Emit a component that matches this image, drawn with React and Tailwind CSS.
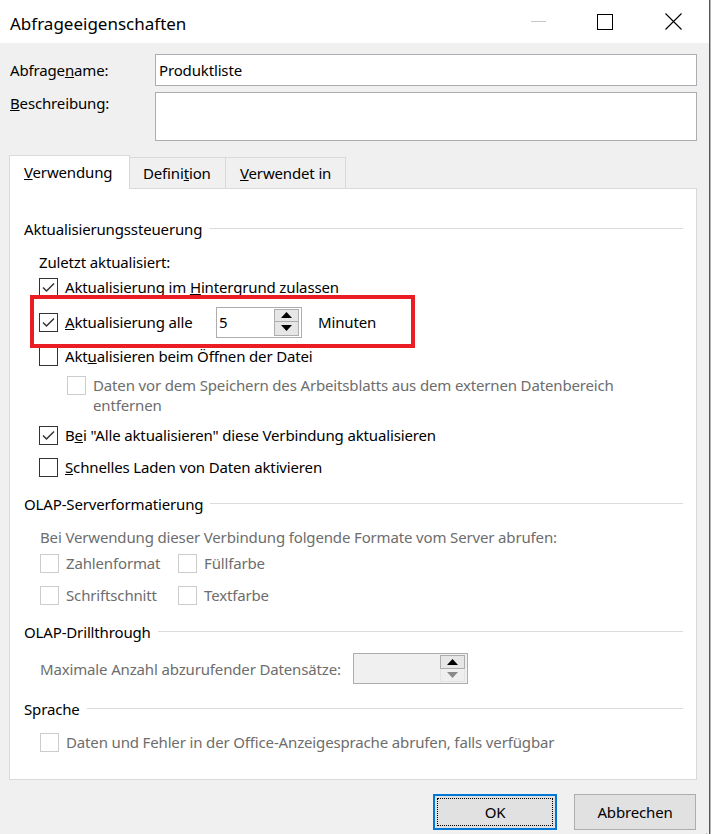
import React from "react";

const FONT = { fontFamily: '"Noto Sans", "Open Sans", Arial, sans-serif' };

function Check({ checked = false, disabled = false }) {
  return (
    <div
      className={`w-[19px] h-[19px] shrink-0 border bg-white flex items-center justify-center ${
        disabled ? "border-[#cccccc]" : "border-[#333333]"
      }`}
    >
      {checked && (
        <svg width="17" height="17" viewBox="0 0 17 17">
          <polyline points="3,8.5 6.5,12 14,4.5" fill="none" stroke="#333333" strokeWidth="1.5" />
        </svg>
      )}
    </div>
  );
}

function GroupHeading({ children, className = "" }) {
  return (
    <div className={`h-[20px] flex items-center ${className}`}>
      <span className="text-black whitespace-nowrap">{children}</span>
      <div className="flex-1 ml-[7px] mr-[13px] h-px bg-[#dcdcdc] -translate-y-[1px]" />
    </div>
  );
}

function Spinner({ value = "", disabled = false, className = "" }) {
  return (
    <div
      className={`h-[31px] border border-[#adadad] flex items-stretch ${
        disabled ? "bg-[#f0f0f0]" : "bg-white"
      } ${className}`}
    >
      <div className="flex-1 flex items-center pl-[2px] text-black">{value}</div>
      <div className="w-[25px] flex flex-col py-[1px] mr-[2px]">
        <div className="h-[14px] border border-[#adadad] bg-[#e6e6e6] flex items-center justify-center">
          <svg width="11" height="6" viewBox="0 0 11 6">
            <polygon points="0,6 5.5,0 11,6" fill="#000" />
          </svg>
        </div>
        <div
          className={`h-[14px] flex items-center justify-center ${
            disabled ? "border border-[#e3e3e3] border-t-0 bg-[#efefef]" : "border border-[#adadad] border-t-0 bg-[#e6e6e6]"
          }`}
        >
          <svg width="11" height="6" viewBox="0 0 11 6">
            <polygon points="0,0 11,0 5.5,6" fill={disabled ? "#8a8a8a" : "#000"} />
          </svg>
        </div>
      </div>
    </div>
  );
}

export default function App() {
  return (
    <div className="w-[711px] h-[834px] flex bg-white text-[15px] leading-[20px] tracking-[-0.15px]" style={FONT}>
      <div className="w-[709px] h-[834px] flex flex-col bg-[#f0f0f0]">
        {/* Title bar */}
        <div className="h-[43px] bg-white flex items-center shrink-0">
          <div className="pl-[10px] mt-[5px] text-[17px] text-black tracking-normal">Abfrageeigenschaften</div>
          <div className="ml-auto flex h-full">
            <div className="w-[70px] flex items-center justify-center">
              <div className="w-[15px] h-px bg-[#c6c6c6]" />
            </div>
            <div className="w-[64px] flex items-center justify-center">
              <div className="w-[16px] h-[16px] border border-black" />
            </div>
            <div className="w-[72px] flex items-center justify-center">
              <svg width="17" height="17" viewBox="0 0 17 17">
                <path d="M0.5 0.5 L16.5 16.5 M16.5 0.5 L0.5 16.5" stroke="#000" strokeWidth="1.1" fill="none" />
              </svg>
            </div>
          </div>
        </div>

        {/* Body */}
        <div className="flex-1 flex flex-col pt-[11px]">
          <div className="flex pl-[10px]">
            <div className="w-[145px] h-[32px] flex items-center text-black">
              Abfrage<u>n</u>ame:
            </div>
            <div className="w-[542px] h-[32px] border border-[#abadb3] bg-white flex items-center pl-[3px] text-black">
              Produktliste
            </div>
          </div>
          <div className="flex pl-[10px] mt-[6px]">
            <div className="w-[145px] pt-[1px] text-black">
              <u>B</u>eschreibung:
            </div>
            <div className="w-[542px] h-[49px] border border-[#abadb3] bg-white" />
          </div>

          {/* Tabs */}
          <div className="flex items-end pl-[9px] mt-[14px]">
            <div className="relative z-10 -mb-px w-[121px] h-[34px] bg-white border border-b-0 border-[#d9d9d9] pl-[14px] flex items-center text-black">
              <span className="-mt-[1px]">
                <u>V</u>erwendung
              </span>
            </div>
            <div className="w-[96px] h-[31px] border-t border-r border-[#d9d9d9] bg-[#f0f0f0] pl-[13px] flex items-center text-black">
              Defini<u>t</u>ion
            </div>
            <div className="w-[120px] h-[31px] border-t border-r border-[#d9d9d9] bg-[#f0f0f0] pl-[14px] flex items-center text-black">
              <span>
                <u>V</u>erwendet in
              </span>
            </div>
          </div>

          {/* Panel */}
          <div className="ml-[9px] w-[688px] h-[592px] bg-white border border-[#d9d9d9] flex flex-col pl-[14px] pt-[30px] text-black">
            <GroupHeading>Aktualisierungssteuerung</GroupHeading>
            <div className="h-[20px] mt-[13px] ml-[15px] flex items-center">Zuletzt aktualisiert:</div>

            <div className="h-[20px] mt-[5px] ml-[15px] flex items-center gap-[7px]">
              <Check checked />
              <span>
                Aktualisierung im <u>H</u>intergrund zulassen
              </span>
            </div>

            <div className="relative h-[32px] mt-[9px] flex items-center">
              <div className="absolute left-[6px] -top-[11px] w-[385px] h-[53px] border-4 border-[#ea1c24] pointer-events-none" />
              <div className="ml-[15px] flex items-center gap-[7px] w-[177px]">
                <Check checked />
                <span>
                  <u>A</u>ktualisierung alle
                </span>
              </div>
              <Spinner value="5" className="w-[86px]" />
              <span className="ml-[16px]">Minuten</span>
            </div>

            <div className="h-[20px] mt-[8px] ml-[15px] flex items-center gap-[7px]">
              <Check />
              <span>
                Akt<u>u</u>alisieren beim Öffnen der Datei
              </span>
            </div>

            <div className="mt-[10px] ml-[43px] flex items-start gap-[7px] text-[#6d6d6d]">
              <Check disabled />
              <span className="-mt-[1px]">
                Daten vor dem Speichern des Arbeitsblatts aus dem externen Datenbereich
                <br />
                entfernen
              </span>
            </div>

            <div className="h-[20px] mt-[10px] ml-[15px] flex items-center gap-[7px]">
              <Check checked />
              <span>
                B<u>e</u>i "Alle aktualisieren" diese Verbindung aktualisieren
              </span>
            </div>

            <div className="h-[20px] mt-[12px] ml-[15px] flex items-center gap-[7px]">
              <Check />
              <span>
                <u>S</u>chnelles Laden von Daten aktivieren
              </span>
            </div>

            <GroupHeading className="mt-[17px]">OLAP-Serverformatierung</GroupHeading>
            <div className="h-[20px] mt-[13px] ml-[16px] flex items-center text-[#6d6d6d]">
              Bei Verwendung dieser Verbindung folgende Formate vom Server abrufen:
            </div>
            <div className="h-[20px] mt-[6px] ml-[16px] flex items-center text-[#6d6d6d]">
              <div className="w-[138px] flex items-center gap-[7px]">
                <Check disabled />
                <span>Zahlenformat</span>
              </div>
              <div className="flex items-center gap-[7px]">
                <Check disabled />
                <span>Füllfarbe</span>
              </div>
            </div>
            <div className="h-[20px] mt-[12px] ml-[16px] flex items-center text-[#6d6d6d]">
              <div className="w-[138px] flex items-center gap-[7px]">
                <Check disabled />
                <span>Schriftschnitt</span>
              </div>
              <div className="flex items-center gap-[7px]">
                <Check disabled />
                <span>Textfarbe</span>
              </div>
            </div>

            <GroupHeading className="mt-[17px]">OLAP-Drillthrough</GroupHeading>
            <div className="h-[31px] mt-[11px] ml-[16px] flex items-center text-[#6d6d6d]">
              <span className="w-[313px]">Maximale Anzahl abzurufender Datensätze:</span>
              <Spinner disabled className="w-[115px]" />
            </div>

            <GroupHeading className="mt-[15px]">Sprache</GroupHeading>
            <div className="h-[20px] mt-[13px] ml-[16px] flex items-center gap-[7px] text-[#6d6d6d]">
              <Check disabled />
              <span>Daten und Fehler in der Office-Anzeigesprache abrufen, falls verfügbar</span>
            </div>
          </div>

          {/* Buttons */}
          <div className="flex justify-end gap-[17px] mt-[14px] pr-[13px]">
            <div className="w-[124px] h-[36px] border-2 border-[#0078d7] bg-[#e1e1e1] p-[2px]">
              <div className="w-full h-full border border-dotted border-black flex items-center justify-center text-black">
                OK
              </div>
            </div>
            <div className="w-[122px] h-[36px] border border-[#adadad] bg-[#e1e1e1] flex items-center justify-center text-black">
              Abbrechen
            </div>
          </div>
          <div className="flex-1 flex justify-end items-end">
            <svg width="10" height="10" viewBox="0 0 10 10" className="mr-[1px]">
              <path d="M9 3 L3 9 M9 6 L6 9" stroke="#b0b0b0" strokeWidth="1" />
            </svg>
          </div>
        </div>
      </div>
      <div className="w-px h-[834px] bg-[#555555]" />
      <div className="w-px h-[834px] bg-[#b5b5b5]" />
    </div>
  );
}
